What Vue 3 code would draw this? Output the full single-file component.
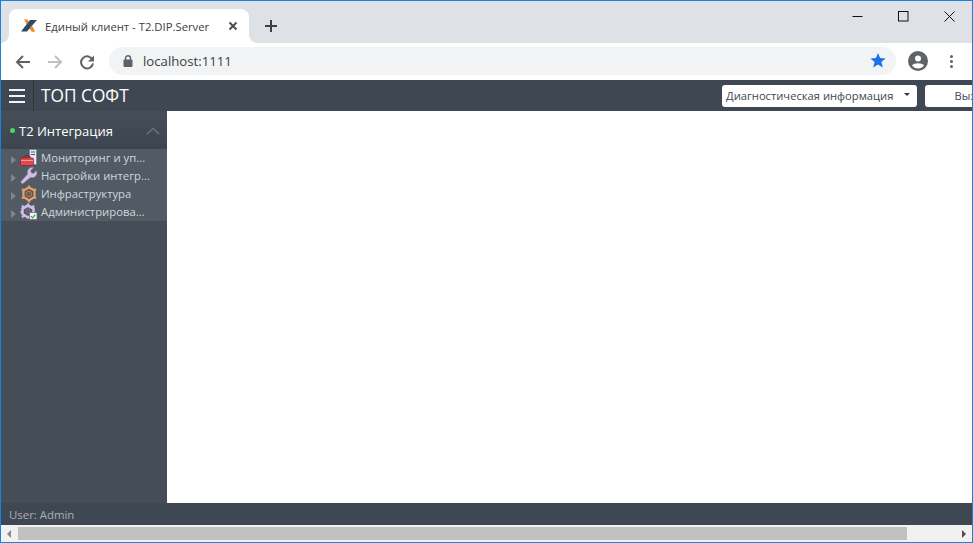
<template>
  <div class="window">
    <div class="titlebar">
      <div class="tab">
        <svg class="favicon" width="16" height="16" viewBox="0 0 16 16">
          <path d="M3 1.5 L6.5 1.5 L14 13.5 L10.5 13.5 Z" fill="#f08a24" />
          <path d="M0 13.5 L6 13.5 L16 2 L9 2 Z" fill="#2b4a66" />
          <path d="M4 2 L6.5 2 L7.6 4.6 L5.6 6 Z M9.4 8.6 L11 7.4 L14 13.5 L11 13.5 Z" fill="#f08a24" />
        </svg>
        <span class="tab-title">Единый клиент - T2.DIP.Server</span>
        <svg class="tab-close" width="10" height="10" viewBox="0 0 10 10">
          <path d="M1.5 1.5 L8.5 8.5 M8.5 1.5 L1.5 8.5" stroke="#45494e" stroke-width="1.8" />
        </svg>
      </div>
      <svg class="newtab" width="12" height="12" viewBox="0 0 12 12">
        <path d="M6 0 V12 M0 6 H12" stroke="#3c4043" stroke-width="2" />
      </svg>
      <div class="win-controls">
        <svg width="11" height="11" viewBox="0 0 11 11"><path d="M0.5 5.5 H10.5" stroke="#111" stroke-width="1" /></svg>
        <svg width="11" height="11" viewBox="0 0 11 11"><rect x="0.5" y="0.5" width="9.5" height="9.5" fill="none" stroke="#111" /></svg>
        <svg width="11" height="11" viewBox="0 0 11 11"><path d="M0.5 0.5 L10.5 10.5 M10.5 0.5 L0.5 10.5" stroke="#111" stroke-width="1" /></svg>
      </div>
    </div>

    <div class="toolbar">
      <svg class="nav" width="16" height="16" viewBox="0 0 16 16">
        <path d="M15 8 H2 M8 2 L2 8 L8 14" fill="none" stroke="#5f6368" stroke-width="2" />
      </svg>
      <svg class="nav" width="16" height="16" viewBox="0 0 16 16">
        <path d="M1 8 H14 M8 2 L14 8 L8 14" fill="none" stroke="#bdc1c6" stroke-width="2" />
      </svg>
      <svg class="nav" width="16" height="16" viewBox="0 0 16 16">
        <path d="M13.6 6 A6 6 0 1 0 14 9.4" fill="none" stroke="#5f6368" stroke-width="2" />
        <path d="M15 1.5 V7.5 H9 Z" fill="#5f6368" />
      </svg>
      <div class="omnibox">
        <svg width="10" height="12" viewBox="0 0 10 12">
          <rect x="0.5" y="4.5" width="9" height="7.5" rx="1" fill="#5f6368" />
          <path d="M2.5 5 V3.2 A2.5 2.5 0 0 1 7.5 3.2 V5" fill="none" stroke="#5f6368" stroke-width="1.4" />
        </svg>
        <span class="url">localhost:1111</span>
        <svg class="star" width="16" height="15" viewBox="0 0 16 15">
          <path d="M8 0 L10.1 5 L15.6 5.5 L11.4 9 L12.8 14.4 L8 11.6 L3.2 14.4 L4.6 9 L0.4 5.5 L5.9 5 Z" fill="#1a73e8" />
        </svg>
      </div>
      <svg class="profile" width="20" height="20" viewBox="0 0 20 20">
        <circle cx="10" cy="10" r="10" fill="#5f6368" />
        <circle cx="10" cy="7.5" r="3" fill="#fff" />
        <path d="M4 14.6 C6 11.6 14 11.6 16 14.6 C14.5 16.6 12.4 17.6 10 17.6 C7.6 17.6 5.5 16.6 4 14.6 Z" fill="#fff" />
      </svg>
      <div class="kebab"><i></i><i></i><i></i></div>
    </div>

    <div class="app-header">
      <div class="burger"><i></i><i></i><i></i></div>
      <div class="brand">ТОП СОФТ</div>
      <div class="header-right">
        <div class="select">
          <span>Диагностическая информация</span>
          <b class="caret"></b>
        </div>
        <div class="logout">Выход</div>
      </div>
    </div>

    <div class="main">
      <aside class="sidebar">
        <div class="side-head">
          <i class="dot"></i>
          <span class="side-title">T2 Интеграция</span>
          <svg width="14" height="8" viewBox="0 0 14 8">
            <path d="M1 7 L7 1.5 L13 7" fill="none" stroke="#6a727a" stroke-width="1.5" />
          </svg>
        </div>
        <ul class="tree">
          <li v-for="item in items" :key="item.label">
            <b class="arrow"></b>
            <svg class="tree-icon" width="18" height="18" viewBox="0 0 18 18" v-html="item.icon"></svg>
            <span class="tree-label">{{ item.label }}</span>
          </li>
        </ul>
      </aside>
      <div class="content"></div>
    </div>

    <div class="statusbar">User: Admin</div>

    <div class="scrollbar">
      <b class="sb-left"></b>
      <div class="sb-track"><div class="sb-thumb"></div></div>
      <b class="sb-right"></b>
    </div>
  </div>
</template>

<script setup>
const items = [
  {
    label: 'Мониторинг и уп...',
    icon: '<rect x="9.5" y="0.5" width="7" height="15" fill="#e4eaf1" stroke="#6b7d92" stroke-width="0.7"/><path d="M11 3H15M11 5.5H15" stroke="#44566c"/><rect x="0.5" y="9" width="13" height="7.5" rx="1" fill="#e2494f" stroke="#8f1f2b" stroke-width="0.7"/><path d="M4 9V7H10V9" fill="none" stroke="#8f1f2b"/><path d="M1 11.5H13" stroke="#ffb0b0" stroke-width="0.8"/>'
  },
  {
    label: 'Настройки интегр...',
    icon: '<path d="M0.5 15 L2.5 17 L10.5 10.5 C13.5 11.5 17 9.5 17 5.5 L16.5 3.5 L13.5 6.5 L11 5.5 L11 3 L14 0.5 C10 -0.5 6.5 2.5 7.5 7 Z" fill="#cdbfe4" stroke="#7d6a9e" stroke-width="0.6"/>'
  },
  {
    label: 'Инфраструктура',
    icon: '<path d="M9 2.5 L14.5 5.5 V12 L9 15.5 L3.5 12 V5.5 Z" fill="#4f565d" stroke="#e9a06a" stroke-width="2.2"/><path d="M9 0.5V3M9 15V17.5M2 4L4 5.5M14 12L16 13.5M2 13.5L4 12M14 5.5L16 4" stroke="#e9a06a" stroke-width="2"/><circle cx="9" cy="9" r="2.6" fill="none" stroke="#b07a4a" stroke-width="1.1"/><path d="M9 7.5V9L10.3 9.8" fill="none" stroke="#b07a4a" stroke-width="0.8"/>'
  },
  {
    label: 'Администрирова...',
    icon: '<path d="M8 2.5 L13.5 5.5 V11 L8 14.5 L2.5 11 V5.5 Z" fill="#59575f" stroke="#cdbfe4" stroke-width="2.6"/><path d="M8 0.5V3M2 2.5L4 4.5M14 2.5L12 4.5M0.5 9H3M2 14.5L4 12.5" stroke="#cdbfe4" stroke-width="2"/><circle cx="8" cy="8" r="2" fill="none" stroke="#7d6a9e"/><rect x="9.5" y="9.5" width="7.5" height="7" fill="#f2f5f2" stroke="#5f6b6f" stroke-width="0.7"/><path d="M11 13.2L12.6 14.8L15.2 11.6" fill="none" stroke="#3a9a4e" stroke-width="1.2"/>'
  }
]
</script>

<style>
html, body { margin: 0; padding: 0; overflow: hidden; background: #fff; }
</style>

<style scoped>
.window {
  width: 973px;
  height: 543px;
  box-sizing: border-box;
  border: 1px solid #1883d7;
  display: flex;
  flex-direction: column;
  overflow: hidden;
  font-family: "Open Sans", "Noto Sans", sans-serif;
}
.titlebar {
  height: 42px;
  flex: none;
  background: #dee1e6;
  display: flex;
  align-items: flex-end;
  padding-left: 8px;
  position: relative;
}
.tab {
  width: 240px;
  height: 34px;
  background: #fff;
  border-radius: 8px 8px 0 0;
  display: flex;
  align-items: center;
  box-sizing: border-box;
  padding-left: 12px;
  position: relative;
}
.tab::before,
.tab::after {
  content: "";
  position: absolute;
  bottom: 0;
  width: 8px;
  height: 8px;
}
.tab::before {
  left: -8px;
  background: radial-gradient(circle at 0 0, transparent 7.5px, #fff 8px);
}
.tab::after {
  right: -8px;
  background: radial-gradient(circle at 100% 0, transparent 7.5px, #fff 8px);
}
.favicon { flex: none; }
.tab-title {
  margin-left: 8px;
  font-size: 11.3px;
  color: #3c4043;
  white-space: nowrap;
  flex: 1;
}
.tab-close { flex: none; margin-right: 11px; }
.newtab { margin: 0 0 11px 16px; }
.win-controls {
  margin-left: auto;
  align-self: flex-start;
  display: flex;
  gap: 35px;
  margin-top: 10px;
  margin-right: 17px;
}
.toolbar {
  height: 37px;
  flex: none;
  background: #fff;
  display: flex;
  align-items: center;
  padding-left: 14px;
  box-sizing: border-box;
}
.nav { margin-right: 16px; flex: none; }
.omnibox {
  margin-left: -2px;
  width: 787px;
  height: 28px;
  background: #f1f3f4;
  border-radius: 14px;
  display: flex;
  align-items: center;
  box-sizing: border-box;
  padding: 0 10px 0 14px;
  margin-top: -2px;
}
.url {
  font-size: 13.2px;
  color: #3c4043;
  margin-left: 10px;
  flex: 1;
}
.star { flex: none; }
.profile { margin-left: 12px; flex: none; margin-top: -1px; }
.kebab {
  margin-left: 22px;
  display: flex;
  flex-direction: column;
  gap: 2px;
  margin-top: -1px;
}
.kebab i { display: block; width: 3px; height: 3px; border-radius: 50%; background: #5f6368; }
.app-header {
  height: 31px;
  flex: none;
  background: #3f4852;
  display: flex;
  align-items: center;
  box-sizing: border-box;
  overflow: hidden;
}
.burger {
  width: 33px;
  height: 31px;
  box-sizing: border-box;
  border-right: 1px solid #2f363d;
  display: flex;
  flex-direction: column;
  justify-content: center;
  gap: 4px;
  padding-left: 8px;
  padding-right: 8px;
  flex: none;
}
.burger i { display: block; height: 2px; width: 16px; background: #f2f3f4; }
.brand { margin-left: 7px; font-size: 17.3px; color: #fff; white-space: nowrap; }
.header-right {
  margin-left: auto;
  display: flex;
  align-items: center;
  gap: 8px;
  width: 250px;
  flex: none;
}
.select {
  width: 195px;
  height: 22px;
  flex: none;
  box-sizing: border-box;
  background: #fff;
  border-radius: 3px;
  display: flex;
  align-items: center;
  padding: 0 6px 0 4px;
  font-size: 11.2px;
  color: #40474e;
  white-space: nowrap;
  justify-content: space-between;
}
.caret {
  border-left: 3.5px solid transparent;
  border-right: 3.5px solid transparent;
  border-top: 3.5px solid #343a40;
  margin-bottom: 3px;
  margin-right: 1px;
}
.logout {
  width: 94px;
  height: 22px;
  flex: none;
  background: #fff;
  border-radius: 3px;
  font-size: 11.2px;
  color: #40474e;
  text-align: center;
  line-height: 22px;
}
.main { flex: 1; display: flex; min-height: 0; }
.sidebar {
  width: 166px;
  flex: none;
  background: #454e57;
}
.side-head {
  height: 38px;
  background: linear-gradient(#454e57, #3d4650);
  display: flex;
  align-items: center;
  padding: 1px 7px 0 9px;
  box-sizing: border-box;
}
.dot { width: 5px; height: 5px; border-radius: 50%; background: #3ddc63; flex: none; }
.side-title {
  margin-left: 4px;
  flex: 1;
  font-size: 13px;
  font-weight: 500;
  color: #fff;
  white-space: nowrap;
}
.tree {
  list-style: none;
  margin: 0;
  padding: 0;
  background: #525b64;
}
.tree li {
  height: 18px;
  display: flex;
  align-items: center;
  padding-left: 10px;
}
.arrow {
  flex: none;
  border-top: 4px solid transparent;
  border-bottom: 4px solid transparent;
  border-left: 5px solid #7d848b;
  margin-top: 4px;
}
.tree-icon { flex: none; margin-left: 4px; margin-top: -1px; }
.tree-label {
  margin-left: 3px;
  font-size: 11.3px;
  color: #cfd6dd;
  white-space: nowrap;
  margin-top: -2px;
}
.content { flex: 1; background: #fff; }
.statusbar {
  height: 22px;
  flex: none;
  background: #3f4852;
  color: #a9afb5;
  font-size: 11.4px;
  line-height: 24px;
  padding-left: 8px;
}
.scrollbar {
  height: 17px;
  flex: none;
  background: #f1f1f1;
  display: flex;
  align-items: center;
}
.sb-left {
  flex: none;
  margin-left: 6px;
  border-top: 4px solid transparent;
  border-bottom: 4px solid transparent;
  border-right: 4px solid #8a8a8a;
}
.sb-track { flex: 1; height: 13px; padding-left: 7px; }
.sb-thumb { width: 889px; height: 13px; background: #c1c1c1; }
.sb-right {
  flex: none;
  margin-right: 6px;
  border-top: 4px solid transparent;
  border-bottom: 4px solid transparent;
  border-left: 4px solid #505050;
}
</style>
